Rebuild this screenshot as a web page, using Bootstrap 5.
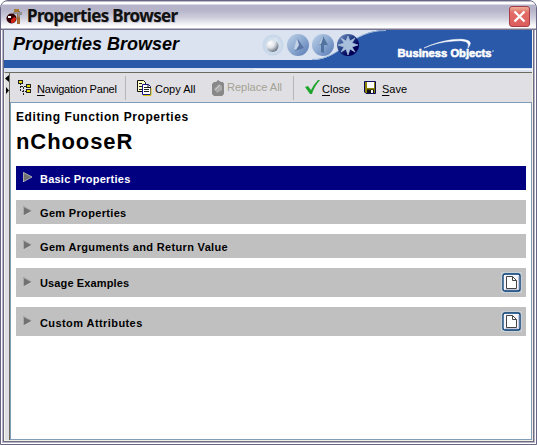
<!DOCTYPE html>
<html lang="en">
<head>
<meta charset="utf-8">
<title>Properties Browser</title>
<link href="https://cdn.jsdelivr.net/npm/bootstrap@5.3.0/dist/css/bootstrap.min.css" rel="stylesheet">
<style>
body{width:537px;height:445px;overflow:hidden;font-family:"Liberation Sans",Arial,sans-serif;color:#000;background:#fff}
svg{display:block;flex:none}
span,h1,h2{white-space:nowrap}
.window-frame{width:537px;height:445px;border:1px solid #686684;border-radius:8px 8px 0 0;background:#b6b4cb;box-shadow:inset 0 0 0 1px #fff;padding:0 2px 2px}
.titlebar{height:29px;margin:0 -2px;padding:1px 6px 0 5px;border-radius:7px 7px 0 0;background:linear-gradient(#77758f 0,#fff 1px,#fff 3px,#b4b3c9 4px,#b5b4c9 9px,#d0cfdd 17px,#f5f5f8 24px,#fff 26px,#fff 27px,#77758f 28px);}
.window-name{font:bold 17px/24px "Noto Sans","Open Sans",sans-serif;color:#111;letter-spacing:-.65px;text-shadow:1px 1px #c5c4d0;margin-left:4px;-webkit-text-stroke:.2px #111}
.window-close{width:21px;height:21px;border:1px solid #a63c48;border-radius:3px;background:linear-gradient(#edb098,#e26c66 30%,#dc5d5f);padding:0}
.client-area{height:412px;border:1px solid #6d6b7d;border-top:0;background:#f3f1e3}
.banner{height:42px;background:#dbe2f0;position:relative}
.banner-name{position:absolute;left:9px;top:3px;font:italic bold 18px/23px "Liberation Sans",sans-serif;letter-spacing:0}
.work-area{height:368px;}
.splitter{width:5px;background:#e0dfe3;border-left:1px solid #f7f6ed;border-top:1px solid #6d6c60;flex:none}
.workspace{border-left:1px solid #6c6b60;border-top:1px solid #6c6b60;min-width:0;margin-right:1px}
.toolbar-row{height:29px;background:#e0dfe3;font-size:11px;line-height:13px;padding-top:0}
.toolbar-row u{text-decoration-thickness:1px;text-underline-offset:2px}
.rule{width:1px;height:24px;background:#b7b6b4;flex:none}
.disabled-tool{color:#a3a294}
.editor{height:338px;background:#fff;border:1px solid #7f9db9;padding:7px 5px 0}
.editor-kicker{font:bold 12px/15px "Liberation Sans",sans-serif;letter-spacing:.57px;margin:0}
.editor-title{font:bold 22px/28px "Liberation Sans",sans-serif;letter-spacing:.9px;margin:3px 0 0}
.section-row{background:#c0c0c0;height:24px;margin-bottom:10px;padding:0 4px 0 7px;font-size:11px;font-weight:bold;line-height:14px}
.section-row.tall{height:29px}
.section-row.chosen{background:#000080;color:#fff}
.section-row span{margin-left:8px;padding-top:2px;letter-spacing:.33px}
.section-row:nth-child(1) span{letter-spacing:.23px}
.section-row:nth-child(4) span{letter-spacing:.12px;padding-top:1px}
.section-row:nth-child(5) span{letter-spacing:.42px}
.doc-button{width:21px;height:21px;border:1px solid #c8d1d9;background:none;padding:0}
#nav{margin-left:4px;width:88px;letter-spacing:-.22px}
#copy{margin-left:11px}
#copytext{margin-left:3px;width:51px;letter-spacing:0}
#replace{margin-left:5px}
#replacetext{margin-left:2px;width:66px}
#check{margin-left:10px}
#closetext{margin-left:1px;width:42px}
#disk{margin-left:0}
#savetext{margin-left:5px}
.section-list{margin-top:10px}
.section-row>svg{position:relative;top:-1px}
</style>
<script src="https://cdn.jsdelivr.net/npm/bootstrap@5.3.0/dist/js/bootstrap.bundle.min.js"></script>
</head>
<body>
<svg width="0" height="0" class="position-absolute"><defs>
<g id="arrow"><path d="M0 0 9 5 0 10z" fill="#717171"/><path d="M.5 10V.5L9 5" fill="none" stroke="#aaa"/><path d="M0 10 9 5" stroke="#ddd" stroke-width=".6"/></g>
<g id="document"><rect x="1" y="1" width="17" height="17" rx="2" fill="#f5f5fc" stroke="#003c74" stroke-width="1.300"/><path d="M16.500 3v13.500H3" fill="none" stroke="#c8c9df"/><path d="M4.500 3.500h6l4 4v8h-10z" fill="#fff" stroke="#444"/><path d="M10.500 3.500v4h4" fill="none" stroke="#444"/></g>
</defs></svg>
<main class="window-frame">
<header class="titlebar d-flex align-items-center">
<svg width="17" height="17" viewBox="0 0 17 17"><path d="M8 1h5v3H8z" fill="#a87832"/><path d="M11 3h3v13h-3z" fill="#a46c32"/><path d="M7 4h9v3h-2v2h-2V6H7z" fill="#909090"/><circle cx="5.500" cy="10.500" r="5" fill="#330205"/><path d="M5 15q5 0 5-5L8 9l-3 3z" fill="#d52416"/><path d="M2 8h3v2H2z" fill="#fff"/></svg>
<span class="window-name">Properties Browser</span>
<button class="window-close btn ms-auto" aria-label="Close"><svg width="19" height="19" viewBox="0 0 19 19"><path d="m4.500 4.500 10 10M14.500 4.500l-10 10" stroke="#fff" stroke-width="2.300"/></svg></button>
</header>
<div class="client-area">
<div class="banner">
<svg width="531" height="42" viewBox="4 30 531 42">
<defs><radialGradient id="pale"><stop stop-color="#e6edf5"/><stop offset="1" stop-color="#c5d5e8"/></radialGradient><radialGradient id="pearl" cx=".3" cy=".25" r=".8"><stop stop-color="#fff"/><stop offset=".5" stop-color="#dfe3e8"/><stop offset="1" stop-color="#65707e"/></radialGradient><linearGradient id="orb" x2="1" y2="1"><stop stop-color="#bed1e8"/><stop offset=".5" stop-color="#8ca9d0"/><stop offset="1" stop-color="#5879b5"/></linearGradient><linearGradient id="starblue" x2="1" y2="1"><stop stop-color="#7f9dca"/><stop offset=".45" stop-color="#213b84"/><stop offset=".7" stop-color="#000058"/></linearGradient></defs>
<path d="M4 60H312C342 60 349 30 387 30H532V68H4z" fill="#2b59a9"/>
<path d="M312 59.500C342 59.500 349 30.500 386 30.500" fill="none" stroke="#9bb5d7"/>
<path d="M254 69.500H532" stroke="#f4f7fb"/><path d="M532.500 30v42" stroke="#f4f4f8"/>
<circle cx="273" cy="45" r="10.500" fill="url(#pale)"/><circle cx="272.500" cy="46" r="6" fill="url(#pearl)"/><path d="m272 41 5-4-1 6" fill="#dbe4ed"/>
<circle cx="298" cy="45" r="11" fill="url(#orb)"/><path d="m297 38 7 10-9 3z" fill="#5875a6"/><path d="m297 38-3 11 2 1 3-5z" fill="#c2d3e7"/>
<circle cx="323" cy="45" r="11" fill="url(#orb)"/><path d="m323 36-5 9h3v7l3 1v-8h4z" fill="#5272a0"/><path d="m323 36-5 9 3-1 2-6" fill="#b6cbe0"/>
<circle cx="348" cy="45" r="11" fill="url(#starblue)"/><path d="m348 36 2 5 5-3-3 5 6 2-6 2 3 5-5-3-2 6-2-6-5 3 3-5-6-2 6-2-3-5 5 3z" fill="#a9c0dc" stroke="#a9c0dc" stroke-width=".7"/>
<path d="M424 48C441 40 462 37 469 41Q472 43 468 48Q471 39 454 41Q437 42 424 48" fill="#fff" stroke="#fff" stroke-width=".5"/>
<text x="397.500" y="57" textLength="94" lengthAdjust="spacingAndGlyphs" font-family="Liberation Sans" font-weight="bold" font-size="11.500" fill="#fff" stroke="#fff" stroke-width=".6">Business Objects</text><circle cx="493" cy="51" r=".7" fill="#fff"/>
</svg>
<span class="banner-name">Properties Browser</span>
</div>
<div class="work-area d-flex">
<div class="splitter"><svg width="4" height="22" viewBox="0 0 4 22"><path d="M4 2v7L0 5.500zM1 14v7l3-3.500z"/></svg></div>
<div class="workspace flex-grow-1">
<nav class="toolbar-row d-flex align-items-center">
<svg width="15" height="15" viewBox="0 0 15 15" style="margin-left:8px" shape-rendering="crispEdges"><path d="M2.500 3v8H9M2.500 6.500H9M5.500 7v8" fill="none" stroke="#222" stroke-dasharray="2 1"/><path d="M.5.5h4v3h-4zM8.500 4.500h4v3h-4zM8.500 9.500h4v3h-4z" fill="#e6db00" stroke="#222"/></svg>
<span id="nav" class="pt-1"><u>N</u>avigation Panel</span>
<i class="rule"></i>
<svg id="copy" width="15" height="16" viewBox="0 0 15 16"><path d="M.5.5h6l2 2v9h-8z" fill="#ffffc9" stroke="#111"/><path d="M5.500 4.500h6l2 2v8h-8z" fill="#fff" stroke="#17178b"/><path d="M2 3.500h3M2 6.500h3M2 9.500h3M7 7.500h5M7 9.500h5M7 11.500h5" stroke="#222"/><path d="M11 4.500v3h3" fill="none" stroke="#111"/><path d="M6 15.500h8V8" fill="none" stroke="#d5c800"/></svg>
<span id="copytext" class="pt-1">Copy All</span>
<svg id="replace" width="14" height="16" viewBox="0 0 14 16"><path d="M3 2h2l2-2 3 2h2l1 2v10l-2 2H3l-2-2V4z" fill="#888"/><path d="m3 9 5-5 3 2v4l-5 3z" fill="#aaa"/><path d="m4 10 5-5" stroke="#d0d0d0"/></svg>
<span id="replacetext" class="disabled-tool">Replace All</span>
<i class="rule"></i>
<svg id="check" width="17" height="17" viewBox="0 0 17 17"><path d="m1 8 3-1 3 4Q10 5 14 1L16 1Q10 8 8 15H6z" fill="#20a52c"/></svg>
<span id="closetext" class="pt-1"><u>C</u>lose</span>
<svg id="disk" width="13" height="13" viewBox="0 0 13 13"><path d="M1 .5h10.500v12H2L.5 11V.5z" fill="#8c8300" stroke="#0c0c58"/><path d="M3 1h7v6H3z" fill="#fff"/><path d="M3 8.500h7V12H3z" fill="#111"/><path d="M7 9h2v3H7z" fill="#fff"/></svg>
<span id="savetext" class="pt-1"><u>S</u>ave</span>
</nav>
<section class="editor">
<h2 class="editor-kicker">Editing Function Properties</h2>
<h1 class="editor-title">nChooseR</h1>
<div class="section-list">
<div class="section-row chosen d-flex align-items-center"><svg width="9" height="10"><use href="#arrow"/></svg><span>Basic Properties</span></div>
<div class="section-row d-flex align-items-center"><svg width="9" height="10"><use href="#arrow"/></svg><span>Gem Properties</span></div>
<div class="section-row d-flex align-items-center"><svg width="9" height="10"><use href="#arrow"/></svg><span>Gem Arguments and Return Value</span></div>
<div class="section-row tall d-flex align-items-center"><svg width="9" height="10"><use href="#arrow"/></svg><span>Usage Examples</span><button class="doc-button ms-auto" aria-label="Add usage example"><svg width="19" height="19"><use href="#document"/></svg></button></div>
<div class="section-row tall d-flex align-items-center"><svg width="9" height="10"><use href="#arrow"/></svg><span>Custom Attributes</span><button class="doc-button ms-auto" aria-label="Add custom attribute"><svg width="19" height="19"><use href="#document"/></svg></button></div>
</div>
</section>
</div></div></div>
</main>
</body>
</html>
